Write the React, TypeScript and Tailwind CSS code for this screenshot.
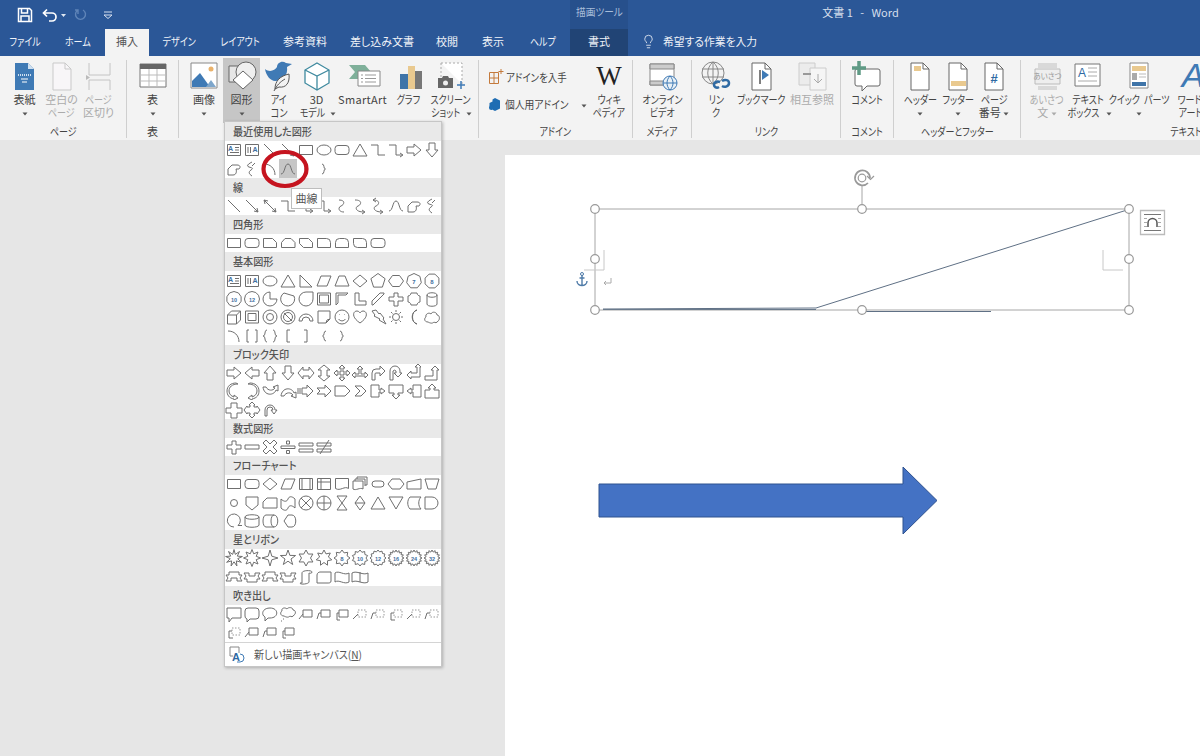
import React from "react";
import { Lightbulb } from "lucide-react";

const poly = (n: number, r: number, rot = -90) => {
  const p: string[] = [];
  for (let i = 0; i < n; i++) {
    const a = ((rot + (360 * i) / n) * Math.PI) / 180;
    p.push((9 + r * Math.cos(a)).toFixed(1) + " " + (9 + r * Math.sin(a)).toFixed(1));
  }
  return "M" + p.join("L") + "z";
};
const star = (n: number, r1: number, r2: number) => {
  const p: string[] = [];
  for (let i = 0; i < n * 2; i++) {
    const a = ((-90 + (180 * i) / n) * Math.PI) / 180;
    const r = i % 2 ? r2 : r1;
    p.push((9 + r * Math.cos(a)).toFixed(1) + " " + (9 + r * Math.sin(a)).toFixed(1));
  }
  return "M" + p.join("L") + "z";
};
const circ = (r: number, cx = 9, cy = 9) => `M${cx - r} ${cy}a${r} ${r} 0 1 0 ${2 * r} 0a${r} ${r} 0 1 0 ${-2 * r} 0z`;
const box = "M6 5h9v7h-9z";

const D: Record<string, string> = {
  tb: "M2.5 3.5h13v11h-13zM10 6.5h4M10 9h4M5 11.5h9",
  vtb: "M2.5 3.5h13v11h-13zM5 6v6M7.5 6v6",
  rect: "M2.5 4.5h13v9h-13z",
  oval: "M2 9a7 5 0 1 0 14 0a7 5 0 1 0-14 0z",
  round: "M5 4.5h8a3 3 0 0 1 3 3v3a3 3 0 0 1-3 3h-8a3 3 0 0 1-3-3v-3a3 3 0 0 1 3-3z",
  snip1: "M2.5 4.5h9l4 4v5h-13z",
  snip2: "M6 4.5h6l4 4v5h-13.500v-5z",
  snip3: "M2.500 4.500h9l4 4v5h-9l-4-4z",
  r1: "M2.500 4.500h9a4 4 0 0 1 4 4v5h-13z",
  r2: "M6.500 4.500h5a4 4 0 0 1 4 4v5h-13v-5a4 4 0 0 1 4-4z",
  r3: "M2.500 4.500h9a4 4 0 0 1 4 4v5h-9a4 4 0 0 1-4-4z",
  tri: "M9 3l7 12h-14z",
  rtri: "M3 3l12 12h-12z",
  para: "M6 4h10l-4 10h-10z",
  trap: "M6 4h6l4 10h-14z",
  dia: "M9 3l7 6-7 6-7-6z",
  pent: poly(5, 7.5),
  hex: "M5.500 3.500h7l4 5.500-4 5.500h-7l-4-5.500z",
  hep: poly(7, 7.5),
  oct: poly(8, 7.5, -67.5),
  dec: poly(10, 7.5),
  dod: poly(12, 7.5),
  line: "M3 3l12 12",
  al: "M3 3l12 12M15 15l-4-1M15 15l-1-4",
  dbl: "M3 3l12 12M3 3l4 1M3 3l1 4M15 15l-4-1M15 15l-1-4",
  el: "M2 4h7v10h7",
  ela: "M2 4h7v10h6M16 14l-3-2M16 14l-3 2",
  eld: "M2 4h7v10h6M16 14l-3-2M16 14l-3 2M2 4l3-2M2 4l3 2",
  cc: "M6 3c7 0 5 5 2 6s-3 6 3 6",
  cca: "M4 3c8 0 6 5 3 6s-3 6 6 6M14 15l-3-2M14 15l-3 2",
  ccd: "M4 3c8 0 6 5 3 6s-3 6 6 6M14 15l-3-2M14 15l-3 2M4 3l3-2M4 3l3 2",
  rar: "M2 6h7v-3l7 6-7 6v-3h-7z",
  lar: "M16 6h-7v-3l-7 6 7 6v-3h7z",
  uar: "M6 16v-7h-3l6-7 6 7h-3v7z",
  dar: "M6 2v7h-3l6 7 6-7h-3v-7z",
  lr: "M6 6h6v-3l5 6-5 6v-3h-6v3l-5-6 5-6z",
  ud: "M6 6v6h-3l6 5 6-5h-3v-6h3l-6-5-6 5z",
  quad: "M9 1l3 3h-2v4h4v-2l3 3-3 3v-2h-4v4h2l-3 3-3-3h2v-4h-4v2l-3-3 3-3v2h4v-4h-2z",
  lru: "M9 2l3 3h-2v5h4v-2l3 3-3 3v-2h-10v2l-3-3 3-3v2h4v-5h-2z",
  bent: "M3 16v-7a4 4 0 0 1 4-4h4v-3l5 5-5 5v-3h-4a1 1 0 0 0-1 1v6z",
  ut: "M3 16v-9a5 5 0 0 1 10 0v2h2l-4 4-4-4h2v-2a2 2 0 0 0-3 0v9z",
  lu: "M15 3v10h-9v2l-4-4 4-4v2h6v-6h-2l3-3 3 3z",
  bu: "M2 16v-4h8v-6h-2l4-4 4 4h-2v10z",
  cr: "M13 2C7 2 4 5 4 9c0 3 2 5 5 6v-2l4 3-4 2v-1c-5-1-7-4-7-8 0-5 4-8 9-8z",
  cl: "M5 2C11 2 14 5 14 9c0 3-2 5-5 6v-2l-4 3 4 2v-1c5-1 7-4 7-8 0-5-4-8-9-8z",
  cu: "M2 5c1 9 11 9 13 3l2 1v-6l-5 2 2 1c-2 3-7 3-9-1z",
  cd: "M2 14c1-9 11-9 13-3l2-1v6l-5-2 2-1c-2-3-7-3-9 1z",
  sr: "M1 6v6M3 6v6M5 6h5v-3l6 6-6 6v-3h-5z",
  nr: "M2 6h8v-3l6 6-6 6v-3h-8l3-3z",
  home: "M2 4h10l5 5-5 5h-10z",
  chev: "M4 4h6l5 5-5 5h-6l5-5z",
  rc: "M2 3h8v5h2v-2l4 3-4 3v-2h-2v5h-8z",
  dc: "M2 3h14v8h-5v2h2l-4 4-4-4h2v-2h-5z",
  lc: "M16 3h-8v5h-2v-2l-4 3 4 3v-2h2v5h8z",
  uc: "M2 16h14v-8h-5v-2h2l-4-4-4 4h2v2h-5z",
  qc: "M9 1l3 3h-1v2h3v-1l3 4-3 4v-1h-3v2h1l-3 3-3-3h1v-2h-3v1l-3-4 3-4v1h3v-2h-1z",
  circ: "M4 15v-6a5 5 0 0 1 10 0l2 0-3 4-3-4h2a3 3 0 0 0-6 0v6z",
  lrc: "M6 2h6v5h5v5h-5v5h-6v-5h-5v-5h5z",
  plus: "M7 3h4v4h5v4h-5v5h-4v-5h-5v-4h5z",
  minus: "M2 7h14v4h-14z",
  mult: "M5 2l4 4 4-4 3 3-4 4 4 4-3 3-4-4-4 4-3-3 4-4-4-4z",
  div: "M2 8h14v2.500h-14zM7.500 3h3v3h-3zM7.500 12.500h3v3h-3z",
  eq: "M2 5h14v3h-14zM2 11h14v3h-14z",
  ne: "M2 5h14v3h-14zM2 11h14v3h-14zM5 16l9-14",
  sm: circ(3.5),
  off: "M3 3h12v8l-6 5-6-5z",
  card: "M6 4h10v10h-14v-6z",
  tape: "M2 5c3 3 6 3 7 0s4-3 7 0v9c-3-3-6-3-7 0s-4 3-7 0z",
  sj: circ(7) + "M4 4l10 10M14 4l-10 10",
  or: circ(7) + "M2 9h14M9 2v14",
  col: "M4 2h10l-10 14h10z",
  sort: "M9 2l5 7-5 7-5-7zM4 9h10",
  ext: "M9 3l7 12h-14z",
  mer: "M2 3h14l-7 12z",
  sto: "M5 3h11c-3 3-3 9 0 12h-11c-3-3-3-9 0-12z",
  del: "M2 3h7a6 6 0 0 1 0 12h-7z",
  seq: "M9 15a6.500 6.500 0 1 1 4-1.500h4",
  mag: "M2 5c0-3 14-3 14 0v8c0 3-14 3-14 0zM2 5c0 3 14 3 14 0",
  dir: "M5 3h8c5 0 5 12 0 12h-8c-4 0-4-12 0-12zM13 3c-4 0-4 12 0 12",
  dis: "M5 9l4-6h4c5 0 5 12 0 12h-4z",
  pre: "M2.500 3.500h13v11h-13zM5 3.500v11M13 3.500v11",
  int: "M2.500 3.500h13v11h-13zM6 3.500v11M2.500 7h13",
  doc: "M2.500 3.500h13v10c-4-3-8 3-13 0z",
  mdoc: "M2 6h10v8c-3-2-7 2-10 0zM4 6v-2h10v7M6 4v-2h10v8h-2",
  term: "M6 6h6a3 3 0 0 1 0 6h-6a3 3 0 0 1 0-6z",
  prep: "M5 4h8l4 5-4 5h-8l-4-5z",
  mi: "M2 7l14-3v10h-14z",
  mo: "M2 4h14l-3 10h-8z",
  pie: "M9 2a7 7 0 1 0 7 7h-7z",
  chord: "M5 3a7 7 0 1 0 10 3z",
  tear: "M2 9a7 7 0 1 0 14 0v-7h-7a7 7 0 0 0-7 7z",
  frame: "M2.500 3h13v12h-13zM4.500 5h9v8h-9z",
  half: "M3 3h12l-2 2h-8v8l-2 2z",
  lsh: "M4 3h4v8h7v4h-11z",
  diag: "M3 15v-4l8-8h4v1l-11 11z",
  plq: "M6 3h6c0 2 2 3 3 3v6c-2 0-3 2-3 3h-6c0-2-2-3-3-3v-6c2 0 3-2 3-3z",
  can: "M4 5c0-3 10-3 10 0v9c0 3-10 3-10 0zM4 5c0 3 10 3 10 0",
  cube: "M2.500 7l4-4h9v9l-4 4h-9zM2.500 7h9v9M11.500 7l4-4",
  bev: "M2.500 3h13v12h-13zM5 5.500h8v7h-8z",
  don: circ(7) + circ(3.5),
  no: circ(7) + circ(4.5) + "M5 5l8 8",
  barc: "M2 13a7 7 0 0 1 14 0h-3a4 4 0 0 0-8 0z",
  fold: "M3 3h12v8l-4 4h-8zM11 15l1-3 3-1",
  smile: circ(7) + "M6.500 6.500h.5M11 6.500h.5M5.500 11c2 2.500 5 2.500 7 0",
  heart: "M9 15c-9-6-7-12-3-12c2 0 3 2 3 2s1-2 3-2c4 0 6 6-3 12z",
  bolt: "M3 3l4-1 3 4 1-1 4 5-1 1 3 5-7-4 1-1-6-3 1-1z",
  sun: circ(3.5) + "M9 2v2M9 14v2M2 9h2M14 9h2M4 4l1.500 1.500M14 4l-1.500 1.500M4 14l1.500-1.500M14 14l-1.500-1.500",
  moon: "M12 2a7.500 7.500 0 0 0 0 14c-6-1-6-13 0-14z",
  cloud: "M5 14c-4 0-4-4-2-5c-1-3 3-5 5-3c1-3 6-2 6 1c3 0 3 5 1 6c-1 2-3 2-4 1c-2 2-4 1-6 0z",
  brp: "M6 3h-2v12h2M12 3h2v12h-2",
  bcp: "M6 3c-3 0-1 6-4 6c3 0 1 6 4 6M12 3c3 0 1 6 4 6c-3 0-1 6-4 6",
  lb: "M11 3h-3v12h3",
  rb: "M7 3h3v12h-3",
  lbr: "M11 4c-3 0-1 5-3.500 5c2.500 0 .5 5 3.500 5",
  rbr: "M7 4c3 0 1 5 3.500 5c-2.500 0-.5 5-3.500 5",
  arc: "M3 4c6 0 11 4 11 11",
  curve: "M2 14c4 0 3.500-10 7-10s3 10 7 10",
  blob: "M3 15v-6l4-4h5c3 0 4 2 2 4h-3c1 3 0 6-3 6z",
  scr: "M9 2c-4 2-6 4-3 5s5 1 2 3-2 4 1 6M12 3l-3 3",
  s16: star(16, 8, 6),
  s4: star(4, 8, 2.5),
  s5: star(5, 8, 3.2),
  s6: star(6, 8, 4.5),
  s7: star(7, 8, 4.5),
  s8: star(8, 8, 5.5),
  s10: star(10, 8, 6),
  s12: star(12, 8, 6.3),
  ex1: star(9, 8.5, 3.8),
  ex2: star(8, 8.5, 4.5),
  rib1: "M1 7h3v-3h10v3h3l-2 3 2 3h-5v-3h-6v3h-5l2-3z",
  rib2: "M1 5h5v3h6v-3h5l-2 3 2 3h-3v3h-10v-3h-3l2-3z",
  scrv: "M5 15v-10c0-3 10-3 10-1c0 2-3 1-3 1v9c0 2-9 3-9 1z",
  scrh: "M2 7c0-2 2-3 3-3h11v9c0 2-2 2-3 2h-11z",
  wave: "M2 5c4-3 9 3 14 0v9c-5 3-10-3-14 0z",
  dwave: "M1 5c5-3 11 3 16 0v9c-5 3-11-3-16 0zM9 4v10",
  wr: "M2 3h14v10h-9l-3 4v-4h-2z",
  wrr: "M5 3h8a3 3 0 0 1 3 3v5a3 3 0 0 1-3 3h-6l-3 3v-3a3 3 0 0 1-2-3v-5a3 3 0 0 1 3-3z",
  wo: "M9 3c9 0 9 10 0 10h-2l-3 3v-4c-4-2-3-9 5-9z",
  wc: "M5 11c-4 0-4-4-2-5c-1-3 3-4 5-2c1-2 6-2 6 1c3 0 3 4 1 5c-1 2-3 2-4 1c-2 2-4 1-6 0zM4 14h1M2 16h1",
  l1: box + "M6 9l-4 5",
  l2: box + "M6 8h-2l-2 6",
  l3: box + "M6 8h-2v7h3",
  d1: "M2 14l5-5",
  d2: "M2 14l2-6h3",
  d3: "M8 15h-4v-7h3",
};
const LABEL: Record<string, string> = { hep: "7", oct: "8", dec: "10", dod: "12", s8: "8", s10: "10", s12: "12", s16: "16", s24: "24", s32: "32", tb: "A", vtb: "A" };
const DASHED = new Set(["d1", "d2", "d3"]);

function Sh({ n }: { n: string }) {
  const d = D[n === "s24" || n === "s32" ? "s16" : n] ?? "";
  const label = LABEL[n];
  return (
    <svg viewBox="0 0 18 18" className="w-[18px] h-[18px]" fill="none" stroke="#6f6f6f" strokeWidth="1">
      <path d={d} />
      {DASHED.has(n) && <rect x="7" y="5" width="8" height="7" strokeDasharray="1.500 1.500" stroke="#999" />}
      {label && (
        <text x={n === "tb" ? 5.5 : n === "vtb" ? 12 : 9} y={n === "tb" ? 10 : n === "vtb" ? 11 : 11.5} textAnchor="middle" fontSize={label.length > 1 ? 5.5 : n === "tb" || n === "vtb" ? 7 : 6} fill="#3f6f9f" stroke="none" fontFamily="Liberation Sans, sans-serif" fontWeight="700">
          {label}
        </text>
      )}
    </svg>
  );
}

const SECTIONS: [string, string][] = [
  ["最近使用した図形", "tb vtb line al rect oval round tri el ela rar dar blob scr arc curve lbr rbr"],
  ["線", "line al dbl el ela eld cc cca ccd curve blob scr"],
  ["四角形", "rect round snip1 snip2 snip3 r1 r2 r3 round"],
  ["基本図形", "tb vtb oval tri rtri para trap dia pent hex hep oct dec dod pie chord tear frame half lsh diag plus plq can cube bev don no barc fold smile heart bolt sun moon cloud arc brp bcp lb rb lbr rbr"],
  ["ブロック矢印", "rar lar uar dar lr ud quad lru bent ut lu bu cr cl cu cd sr nr home chev rc dc lc uc lrc qc circ"],
  ["数式図形", "plus minus mult div eq ne"],
  ["フローチャート", "rect round dia para pre int doc mdoc term prep mi mo sm off card tape sj or col sort ext mer sto del seq mag dir dis"],
  ["星とリボン", "ex1 ex2 s4 s5 s6 s7 s8 s10 s12 s16 s24 s32 rib1 rib2 rib1 rib2 scrv scrh wave dwave"],
  ["吹き出し", "wr wrr wo wc l1 l2 l3 d1 d2 d3 d1 d2 d3 l1 l2 l3"],
];

function K({ children }: { children: React.ReactNode }) {
  return <span className="inline-block whitespace-pre scale-x-[0.82]">{children}</span>;
}
const ALL_KANA = /^[ぁ-んァ-ヶーィッ\s]+$/;
const txt = (n: React.ReactNode) => (typeof n === "string" && ALL_KANA.test(n) ? <K>{n}</K> : n);

function Tri({ dim }: { dim?: boolean }) {
  return (
    <svg viewBox="0 0 6 4" className="inline-block w-[6px] h-[4px] align-middle">
      <path d="M0.500 0.500h5l-2.500 3z" fill={dim ? "#aaa" : "#555"} />
    </svg>
  );
}

function Ic({ children }: { children: React.ReactNode }) {
  return (
    <svg viewBox="0 0 36 32" className="w-9 h-8 shrink-0" fill="none">
      {children}
    </svg>
  );
}

function Btn({ w, lines, icon, dim, active }: { w: number; lines: React.ReactNode[]; icon: React.ReactNode; dim?: boolean; active?: boolean }) {
  return (
    <div style={{ width: w }} className={`flex flex-col items-center shrink-0 h-[65px] -mt-[2px] pt-[2px] ${active ? "bg-[#c6c6c6]" : ""} ${dim ? "text-[#ababab]" : "text-[#444]"}`}>
      {icon}
      <div className="text-center leading-[13px] whitespace-nowrap mt-[1px]">
        {lines.map((l, i) => (
          <div key={i} className="h-[13px]">
            {txt(l)}
          </div>
        ))}
      </div>
    </div>
  );
}

function Group({ w, label, children, last }: { w: number; label?: string; children: React.ReactNode; last?: boolean }) {
  return (
    <div style={{ width: w }} className={`shrink-0 h-[78px] flex flex-col ${last ? "" : "border-r border-[#cfcfcf]"}`}>
      <div className="flex h-[64px] px-[6px]">{children}</div>
      <div className="h-[14px] leading-[14px] text-center text-[#444] whitespace-nowrap">{txt(label)}</div>
    </div>
  );
}

const TABS: [string, number][] = [
  ["ファイル", 50],
  ["ホーム", 55],
  ["挿入", 44],
  ["デザイン", 61],
  ["レイアウト", 60],
  ["参考資料", 70],
  ["差し込み文書", 84],
  ["校閲", 46],
  ["表示", 46],
  ["ヘルプ", 54],
];

export default function App() {
  return (
    <div className="relative w-[1200px] h-[756px] overflow-hidden flex flex-col bg-[#e6e6e6] text-[11px] font-['Noto_Sans_CJK_JP','Noto_Sans',sans-serif] [font-feature-settings:'palt']">
      {/* Title bar */}
      <div className="h-[29px] flex bg-[#2b5797] shrink-0">
        <div className="w-[570px] flex items-center pl-[17px] gap-[8px]">
          <svg viewBox="0 0 16 16" className="w-[16px] h-[16px]" fill="none" stroke="#fff" strokeWidth="1.500">
            <path d="M1.500 1.500h11l2 2v11h-13z" />
            <path d="M4.500 2v4h6v-4M4 14v-5h8v5" />
          </svg>
          <svg viewBox="0 0 24 14" className="w-[24px] h-[14px] ml-[1px]" fill="none" stroke="#fff" strokeWidth="1.700">
            <path d="M2 5h8a4 4 0 0 1 0 8h-3M5 1.500l-3.500 3.500 3.500 3.500" />
            <path d="M19 6h5l-2.500 3z" fill="#dfe7f2" stroke="none" />
          </svg>
          <svg viewBox="0 0 14 14" className="w-[14px] h-[14px]" fill="none" stroke="#5f84b8" strokeWidth="1.400">
            <path d="M9 2a5 5 0 1 1-5 0M4 6v-4h-3" />
          </svg>
          <svg viewBox="0 0 10 8" className="w-[10px] h-[8px] ml-[7px]" fill="none" stroke="#d6e0ee">
            <path d="M1 1h8" />
            <path d="M1 4h8l-4 3.500z" fill="none" />
          </svg>
        </div>
        <div className="w-[58px] bg-[#27508c] text-[#a8bdd9] text-[10.500px] flex items-center justify-center pb-[5px]"><span className="inline-block scale-x-[0.92] whitespace-nowrap">描画ツール</span></div>
        <div className="w-[465px] text-[#d5dfec] text-[11px] flex items-center justify-center whitespace-pre pb-[5px]">文書 1   -   Word</div>
      </div>
      {/* Tab row */}
      <div className="h-[27px] flex bg-[#2b5797] shrink-0">
        {TABS.map(([t, w]) => (
          <div key={t} style={{ width: w }} className={`flex items-center justify-center whitespace-nowrap pb-[2px] ${t === "挿入" ? "bg-[#f3f3f3] text-[#555]" : "text-[#f0f3f8]"}`}>
            {txt(t)}
          </div>
        ))}
        <div className="w-[58px] bg-[#214475] text-[#eef2f7] flex items-center justify-center pb-[2px]">書式</div>
        <div className="flex items-center pl-[13px] gap-[7px] text-[#eef2f7] pb-[2px]">
          <Lightbulb size={15} strokeWidth={1.300} />
          <span className="inline-block origin-left scale-x-[0.98] whitespace-nowrap">希望する作業を入力</span>
        </div>
      </div>
      {/* Ribbon */}
      <div className="h-[84px] bg-[#f3f3f3] pt-[4px] flex shrink-0 overflow-hidden">
        <Group w={127} label="ページ">
          <Btn w={37} lines={["表紙", <Tri />]} icon={<Ic><path d="M8 3h13l6 6v21h-19z" fill="#3f7ab5" /><path d="M21 3v6h6" fill="#cfe0f0" /><path d="M11 15h13" stroke="#cfe0f0" strokeDasharray="1 1" strokeWidth="2" /><path d="M14 19h7M15 22h5" stroke="#fff" /></Ic>} />
          <Btn w={37} dim lines={["空白の", "ページ"]} icon={<Ic><path d="M9 3h12l6 6v21h-18z" fill="#f8f6f8" stroke="#c9c9c9" /><path d="M21 3v6h6" stroke="#c9c9c9" /></Ic>} />
          <Btn w={37} dim lines={["ページ", "区切り"]} icon={<Ic><path d="M8 3v12M29 3v12M8 20v10M29 20v10M8 15h21M8 20h21" stroke="#c4c4c4" /><path d="M5 15l4 2.500-4 2.500z" fill="#bbb" /></Ic>} />
        </Group>
        <Group w={52} label="表">
          <div className="-ml-[6px]">
            <Btn w={51} lines={["表", <Tri />]} icon={<Ic><path d="M5 4h26v23h-26z" fill="#fff" stroke="#777" /><path d="M5 4h26v5h-26z" fill="#666" /><path d="M5 15h26M5 21h26M14 9v18M22 9v18" stroke="#bbb" /></Ic>} />
          </div>
        </Group>
        <Group w={300}>
          <Btn w={38} lines={["画像", <Tri />]} icon={<Ic><path d="M5 3h26v25h-26z" fill="#fff" stroke="#888" /><circle cx="25" cy="9" r="2.500" fill="#eab26b" /><path d="M6 27v-6l8-8 10 14z" fill="#3f7ab5" /><path d="M20 27l5-7 5 7z" fill="#7ea6cb" /></Ic>} />
          <Btn w={37} active lines={["図形", <Tri />]} icon={<Ic><path d="M5 6h15v16h-15z" fill="#e6e6e6" stroke="#666" /><circle cx="22" cy="12" r="10" fill="#efefef" stroke="#666" /><path d="M19 11l10 9-10 9-10-9z" fill="#fff" stroke="#666" /></Ic>} />
          <Btn w={38} lines={["アイ", "コン"]} icon={<Ic><path d="M4 9c5 4 10 1 12-2c0-4 5-7 9-4l6 1-5 3c1 7-3 14-12 14c-4 0-9-5-10-12z" fill="#3f7ab5" /><path d="M14 29c0-8 5-13 14-15c1 9-3 14-10 13z" fill="#f3f3f3" stroke="#555" /><path d="M13 31c3-6 6-9 11-12" stroke="#555" /></Ic>} />
          <Btn w={37} lines={["3D", <span><K>モデル</K> <Tri /></span>]} icon={<Ic><path d="M18 3l12 7v13l-12 7-12-7v-13z" stroke="#3f8a9f" strokeWidth="1.300" fill="#fff" /><path d="M6 10l12 6 12-6M18 16v14" stroke="#3f8a9f" strokeWidth="1.300" /></Ic>} />
          <Btn w={55} lines={[<span className="tracking-[0.3px]">SmartArt</span>]} icon={<Ic><path d="M4 5h16l6 7-6 7h-16l6-7z" fill="#7fb09a" /><path d="M13 11h22v15h-22z" fill="#fff" stroke="#888" /><path d="M20 15h11M20 18.500h11M20 22h11M16 15h2M16 18.500h2M16 22h2" stroke="#999" /></Ic>} />
          <Btn w={37} lines={["グラフ"]} icon={<Ic><path d="M9 14h8v15h-8z" fill="#3f74a8" /><path d="M17 6h7v23h-7z" fill="#e9c98f" /><path d="M24 11h7v18h-7z" fill="#777" /></Ic>} />
          <Btn w={46} lines={["スクリーン", <span><K>ショット</K> <Tri /></span>]} icon={<Ic><path d="M9 3h21v21" stroke="#aaa" strokeDasharray="2 2" fill="#fff" /><path d="M9 3v14" stroke="#aaa" strokeDasharray="2 2" /><path d="M6 18h4l1-2h5l1 2h4v10h-15z" fill="#666" /><circle cx="13.500" cy="23" r="2.500" fill="#eee" /><path d="M29 21v8M25 25h8" stroke="#3f7ab5" strokeWidth="1.500" /></Ic>} />
        </Group>
        <Group w={154} label="アドイン">
          <div className="w-[108px] flex flex-col pl-[3px] text-[#444]">
            <div className="flex items-center h-[32px] mt-[1px] gap-[2px] whitespace-nowrap">
              <svg viewBox="0 0 16 16" className="w-[16px] h-[16px] shrink-0" fill="none" stroke="#c47a3c"><path d="M1.500 3.500h9v11h-9zM1.500 9h9M6 3.500v11M13 0v5M10.500 2.500h5" /></svg>
              <span className="inline-block origin-left scale-x-[0.86]">アドインを入手</span>
            </div>
            <div className="flex items-center h-[22px] gap-[3px] whitespace-nowrap">
              <svg viewBox="0 0 14 14" className="w-[14px] h-[14px] shrink-0"><path d="M7 1l5 2.500v8l-5 2.500-2-1v-4h-3.500v-3l3-1.500v-2z" fill="#1f6db3" /><circle cx="3.500" cy="10.500" r="2.500" fill="#1f6db3" /></svg>
              <span className="inline-block origin-left scale-x-[0.89]">個人用アドイン</span>
              <span className="ml-[2px]"><Tri /></span>
            </div>
          </div>
          <Btn w={32} lines={["ウィキ", "ペディア"]} icon={<div className="h-8 w-9 flex items-center justify-center font-['Liberation_Serif',serif] text-[27px] text-[#222] leading-[32px]">W</div>} />
        </Group>
        <Group w={59} label="メディア">
          <div className="-ml-[6px]">
            <Btn w={58} lines={["オンライン", "ビデオ"]} icon={<Ic><path d="M6 4h24v21h-24z" fill="#fff" stroke="#888" /><path d="M6 4h24v5h-24zM6 21h14v4h-14z" fill="#ccc" stroke="#888" /><circle cx="26" cy="23" r="7" fill="#e8f0f6" stroke="#3f7ab5" /><path d="M19 23h14M26 16c-4 4-4 10 0 14M26 16c4 4 4 10 0 14" stroke="#3f7ab5" /></Ic>} />
          </div>
        </Group>
        <Group w={149} label="リンク">
          <Btn w={36} lines={["リン", "ク"]} icon={<Ic><circle cx="15" cy="13" r="11" fill="#f3f3f3" stroke="#888" /><path d="M4 9h22M4 17h22M15 2c-7 6-7 16 0 22M15 2c7 6 7 16 0 22M15 2v22" stroke="#888" /><path d="M16 25c0-3 3-4 6-3M24 26c3 2 7 0 7-3s-4-4-7-2M21 27c-3 2-5-1-5-2" stroke="#2f6aa3" strokeWidth="2.500" /></Ic>} />
          <Btn w={55} lines={["ブックマーク"]} icon={<Ic><path d="M8 3h13l6 6v21h-19z" fill="#fff" stroke="#666" /><path d="M21 3v6h6" stroke="#666" /><path d="M16 10v14" stroke="#555" strokeWidth="1.500" /><path d="M18 10l7 5-7 5z" fill="#3f7ab5" /></Ic>} />
          <Btn w={46} dim lines={["相互参照"]} icon={<Ic><path d="M5 3h16v22h-16z" fill="#ececec" stroke="#ccc" /><path d="M16 8h16v22h-16z" fill="#f5f5f5" stroke="#ccc" /><path d="M9 14h8" stroke="#999" strokeWidth="2" /><path d="M24 14v8M20 19l4 4 4-4" stroke="#aaa" /></Ic>} />
        </Group>
        <Group w={53} label="コメント">
          <div className="-ml-[6px]">
            <Btn w={52} lines={["コメント"]} icon={<Ic><path d="M8 9h21a2 2 0 0 1 2 2v13a2 2 0 0 1-2 2h-11l-5 5v-5h-5a2 2 0 0 1-2-2v-13a2 2 0 0 1 2-2z" fill="#fff" stroke="#666" /><path d="M10 1v14M3 8h14" stroke="#5f9a85" strokeWidth="3.500" /></Ic>} />
          </div>
        </Group>
        <Group w={127} label="ヘッダーとフッター">
          <div className="ml-[1px] flex">
            <Btn w={38} lines={["ヘッダー", <Tri />]} icon={<Ic><path d="M9 3h12l6 6v21h-18z" fill="#fff" stroke="#666" /><path d="M21 3v6h6" stroke="#666" /><path d="M12 6h7v5h-7z" fill="#e9c98f" /></Ic>} />
            <Btn w={38} lines={["フッター", <Tri />]} icon={<Ic><path d="M9 3h12l6 6v21h-18z" fill="#fff" stroke="#666" /><path d="M21 3v6h6" stroke="#666" /><path d="M11 21h15v5h-15z" fill="#e9c98f" /></Ic>} />
            <Btn w={34} lines={["ページ", <span>番号 <Tri /></span>]} icon={<Ic><path d="M9 3h12l6 6v21h-18z" fill="#fff" stroke="#666" /><path d="M21 3v6h6" stroke="#666" /><text x="18" y="23" fontSize="13" textAnchor="middle" fill="#2f6aa3" fontWeight="700" fontFamily="Liberation Sans, sans-serif">#</text></Ic>} />
          </div>
        </Group>
        <Group w={330} label="テキスト" last>
          <div className="-ml-[6px] flex">
            <Btn w={52} dim lines={["あいさつ", <span>文 <Tri dim /></span>]} icon={<Ic><path d="M9 3h19v5h-19zM9 26h19v4h-19z" fill="#d9d9d9" /><path d="M6 9h25v15h-25z" fill="#eee" stroke="#bbb" /><text x="18.500" y="19" fontSize="7.500" textAnchor="middle" fill="#999" stroke="none">あいさつ</text></Ic>} />
            <Btn w={30} lines={["テキスト", <span><K>ボックス</K> <Tri /></span>]} icon={<Ic><path d="M5 4h25v22h-25z" fill="#fff" stroke="#777" /><text x="12" y="17" fontSize="12" textAnchor="middle" fill="#2f6aa3" fontFamily="Liberation Sans, sans-serif">A</text><path d="M18 8h9M18 12h9M18 16h9M8 21h19" stroke="#aaa" /></Ic>} />
            <Btn w={72} lines={["クイック  パーツ", <Tri />]} icon={<Ic><path d="M9 3h18v25h-18z" fill="#fff" stroke="#888" /><path d="M11 6h14v5h-14z" fill="#e9c98f" /><path d="M11 13h5v7h-5z" fill="#aaa" /><path d="M11 22h14v4h-14z" fill="#3f74a8" /><path d="M18 14h7M18 17h7" stroke="#bbb" /></Ic>} />
            <Btn w={30} lines={["ワード", "アート"]} icon={<Ic><text x="21" y="27" fontSize="34" textAnchor="middle" fill="#3f7ab5" fontStyle="italic" fontFamily="Liberation Sans, sans-serif">A</text></Ic>} />
          </div>
        </Group>
      </div>
      {/* Document area */}
      <div className="flex-1 pl-[505px] pt-[15px]">
        <div className="w-[695px] h-[601px] bg-white">
          <svg viewBox="505 155 695 601" className="w-[695px] h-[601px]" fill="none">
            <path d="M595 209h534v101h-534zM862 209v-24" stroke="#a6a6a6" />
            <path d="M604 250v20h-20M1103 250v20h20" stroke="#c8c8c8" />
            <path d="M603 309l213-1 311-98" stroke="#5f7085" />
            <path d="M603 309.500h213" stroke="#6a7a8c" />
            <path d="M866 311.500h125" stroke="#5f7085" />
            {[[595, 209], [862, 209], [1129, 209], [595, 259], [1129, 259], [595, 310], [862, 310], [1129, 310]].map(([x, y]) => (
              <circle key={x + "-" + y} cx={x} cy={y} r="4.300" fill="#fff" stroke="#999" strokeWidth="1.200" />
            ))}
            <path d="M868 183a7.500 7.500 0 1 1 2-5" stroke="#999" strokeWidth="1.700" />
            <circle cx="862" cy="178" r="3.800" stroke="#999" strokeWidth="1.200" />
            <path d="M867 176l3.500 3.500 3.500-3.500" stroke="#999" strokeWidth="1.200" />
            <path d="M582 275v11M577 281c0 6 10 6 10 0M579.500 278h5" stroke="#4f7ba8" strokeWidth="1.400" />
            <circle cx="582" cy="274" r="1.500" stroke="#4f7ba8" />
            <path d="M611 278v5h-7M606 281l-2 2 2 2" stroke="#aaa" />
            <path d="M1140.500 210.500h24v24h-24z" fill="#fff" stroke="#bbb" strokeWidth="1.300" />
            <path d="M1144 214.500h17M1144 230.500h17" stroke="#777" />
            <path d="M1144 218.500h3M1158 218.500h3M1144 222.500h3M1158 222.500h3M1144 226.500h3M1158 226.500h3" stroke="#aaa" />
            <path d="M1148 227v-4a4.500 4.500 0 0 1 9 0v4" stroke="#555" strokeWidth="1.500" />
            <path d="M599 484h304v-17l34 33.500-34 33.500v-17h-304z" fill="#4472c4" stroke="#2f528f" />
          </svg>
        </div>
      </div>
      {/* Shapes dropdown */}
      <div className="absolute left-[224px] top-[121px] w-[218px] h-[546px] bg-white border border-[#c6c6c6] shadow-[1px_1px_3px_rgba(0,0,0,0.25)]">
        {SECTIONS.map(([title, list]) => (
          <div key={title}>
            <div className="h-[19px] bg-[#e9e9e9] pl-[8px] leading-[19px] text-[#555] font-medium">
              <span className="inline-block origin-left scale-x-[0.92] whitespace-nowrap">{title}</span>
            </div>
            <div className="grid grid-cols-[repeat(12,18px)] auto-rows-[18.350px]">
              {list.split(" ").map((n, i) => (
                <div key={i} className={`flex items-center justify-center ${title === "最近使用した図形" && i === 15 ? "bg-[#c6c6c6]" : ""}`}>
                  <Sh n={n} />
                </div>
              ))}
            </div>
          </div>
        ))}
        <div className="border-t border-[#d4d4d4] h-[24px] flex items-center pl-[3px] gap-[8px] text-[#555]">
          <svg viewBox="0 0 18 18" className="w-[18px] h-[18px] shrink-0" fill="none">
            <path d="M2 2h9v6M2 2v9h3" stroke="#888" />
            <path d="M12 9a4 4 0 1 1 0 8h-3" stroke="#3f7ab5" />
            <text x="8" y="16" fontSize="11" fontWeight="700" textAnchor="middle" fill="#2f6aa3" fontFamily="Liberation Sans, sans-serif">A</text>
          </svg>
          <span className="inline-block origin-left scale-x-[0.92] whitespace-nowrap">新しい描画キャンバス(<span className="underline">N</span>)</span>
        </div>
      </div>
      {/* Tooltip */}
      <div className="absolute left-[291px] top-[188px] w-[31px] h-[21px] bg-white border border-[#bdbdbd] text-[#555] flex items-center justify-center">曲線</div>
      {/* Red mark drawn over the screenshot */}
      <svg viewBox="0 0 50 42" className="absolute left-[260px] top-[148px] w-[50px] h-[42px]" fill="none">
        <ellipse cx="25" cy="21" rx="21.500" ry="17" stroke="#c5141f" strokeWidth="4.200" />
      </svg>
    </div>
  );
}
